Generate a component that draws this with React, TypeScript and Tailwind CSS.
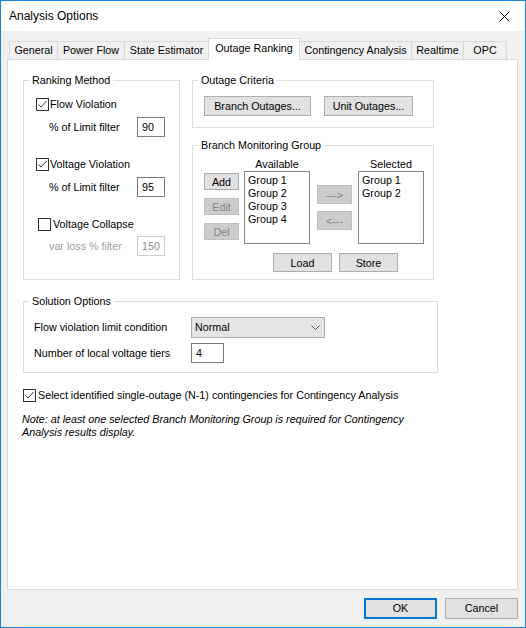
import type { ReactNode } from "react";

const tabs = [
  { label: "General", className: "w-[48px] h-[18px] border-l border-t" },
  { label: "Power Flow", className: "w-[67px] h-[18px] border-l border-t" },
  { label: "State Estimator", className: "w-[84px] h-[18px] border-l border-t" },
  {
    label: "Outage Ranking",
    className: "w-[92px] h-[22px] -mb-px border-l border-t border-r bg-white pb-[3px]",
  },
  { label: "Contingency Analysis", className: "w-[111px] h-[18px] border-t" },
  { label: "Realtime", className: "w-[52px] h-[18px] border-l border-t" },
  { label: "OPC", className: "w-[44px] h-[18px] border-l border-t border-r" },
];

function GroupBox({
  title,
  className = "",
  children,
}: {
  title: string;
  className?: string;
  children: ReactNode;
}) {
  return (
    <fieldset className={`border border-[#dcdcdc] ${className}`}>
      <legend className="ml-[5px] px-[3px] leading-[14px]">{title}</legend>
      {children}
    </fieldset>
  );
}

function CheckBox({ checked = false }: { checked?: boolean }) {
  return (
    <span className="flex h-[13px] w-[13px] shrink-0 items-center justify-center border border-[#333333] bg-white">
      {checked ? (
        <svg width="11" height="11" viewBox="0 0 11 11">
          <polyline
            points="1.5,5.5 4,8 9.5,2"
            fill="none"
            stroke="#333333"
            strokeWidth="1"
          />
        </svg>
      ) : null}
    </span>
  );
}

function Button({
  label,
  className = "",
  disabled = false,
}: {
  label: string;
  className?: string;
  disabled?: boolean;
}) {
  return (
    <div
      className={`flex items-center justify-center border leading-[14px] ${
        disabled
          ? "border-[#bfbfbf] bg-[#cccccc] text-[#838383]"
          : "border-[#adadad] bg-[#e1e1e1]"
      } ${className}`}
    >
      {label}
    </div>
  );
}

function TextBox({
  value,
  className = "",
  disabled = false,
}: {
  value: string;
  className?: string;
  disabled?: boolean;
}) {
  return (
    <div
      className={`flex items-center border bg-white pl-[4px] leading-[14px] ${
        disabled ? "border-[#cccccc] text-[#8d8d8d]" : "border-[#7a7a7a]"
      } ${className}`}
    >
      {value}
    </div>
  );
}

function ListBox({ heading, items }: { heading: string; items: string[] }) {
  return (
    <div className="flex w-[66px] flex-col">
      <div className="flex h-[19px] items-end justify-center leading-[14px]">
        {heading}
      </div>
      <div className="h-[73px] border border-[#828790] bg-white pl-[3px] pt-[2px] leading-[13px]">
        {items.map((item) => (
          <div key={item}>{item}</div>
        ))}
      </div>
    </div>
  );
}

export default function App() {
  return (
    <div className="flex h-[628px] w-[526px] flex-col border border-[#1883d7] bg-[#f0f0f0] font-['Liberation_Sans',Arial,sans-serif] text-[10.75px] text-black">
      {/* title bar */}
      <div className="flex h-[30px] shrink-0 items-center justify-between bg-white pl-[8px] pr-[15px] text-[12px]">
        <span>Analysis Options</span>
        <svg width="11" height="11" viewBox="0 0 11 11">
          <path d="M0.5 0.5 L10.5 10.5 M10.5 0.5 L0.5 10.5" stroke="#000" strokeWidth="1" />
        </svg>
      </div>

      <div className="flex flex-1 flex-col pt-[7px]">
        {/* tab strip */}
        <div className="relative z-10 flex h-[21px] items-end pl-[8px]">
          {tabs.map((tab) => (
            <div
              key={tab.label}
              className={`flex items-center justify-center border-[#d9d9d9] whitespace-nowrap ${tab.className}`}
            >
              {tab.label}
            </div>
          ))}
        </div>

        {/* tab page */}
        <div className="ml-[6px] h-[531px] w-[511px] border border-[#d9d9d9] bg-white pl-[15px] pt-[13px]">
          <div className="flex items-start">
            <GroupBox title="Ranking Method" className="w-[157px]">
              <div className="flex flex-col pb-[23px]">
                <div className="ml-[12px] mt-[10px] flex h-[14px] items-center">
                  <CheckBox checked />
                  <span className="ml-[1px]">Flow Violation</span>
                </div>
                <div className="ml-[25px] mt-[6px] flex items-center">
                  <span className="w-[88px]">% of Limit filter</span>
                  <TextBox value="90" className="h-[20px] w-[28px]" />
                </div>
                <div className="ml-[12px] mt-[20px] flex h-[14px] items-center">
                  <CheckBox checked />
                  <span className="ml-[1px]">Voltage Violation</span>
                </div>
                <div className="ml-[25px] mt-[6px] flex items-center">
                  <span className="w-[88px]">% of Limit filter</span>
                  <TextBox value="95" className="h-[20px] w-[28px]" />
                </div>
                <div className="ml-[14px] mt-[20px] flex h-[14px] items-center">
                  <CheckBox />
                  <span className="ml-[2px]">Voltage Collapse</span>
                </div>
                <div className="ml-[25px] mt-[5px] flex items-center">
                  <span className="w-[88px] text-[#a0a0a0]">var loss % filter</span>
                  <TextBox value="150" disabled className="h-[20px] w-[28px]" />
                </div>
              </div>
            </GroupBox>

            <div className="ml-[12px] flex w-[242px] flex-col">
              <GroupBox title="Outage Criteria" className="w-[242px]">
                <div className="flex gap-[13px] pb-[11px] pl-[11px] pt-[9px]">
                  <Button label="Branch Outages..." className="h-[20px] w-[107px]" />
                  <Button label="Unit Outages..." className="h-[20px] w-[89px]" />
                </div>
              </GroupBox>

              <GroupBox title="Branch Monitoring Group" className="mt-[10px] w-[242px]">
                <div className="flex flex-col pb-[7px] pl-[11px]">
                  <div className="flex items-start">
                    <div className="flex w-[35px] flex-col gap-[8px] pt-[21px]">
                      <Button label="Add" className="h-[17px]" />
                      <Button label="Edit" disabled className="h-[17px]" />
                      <Button label="Del" disabled className="h-[17px]" />
                    </div>
                    <div className="ml-[5px]">
                      <ListBox
                        heading="Available"
                        items={["Group 1", "Group 2", "Group 3", "Group 4"]}
                      />
                    </div>
                    <div className="ml-[7px] flex w-[35px] flex-col gap-[7px] pt-[33px]">
                      <Button label="--->" disabled className="h-[19px]" />
                      <Button label="<---" disabled className="h-[19px]" />
                    </div>
                    <div className="ml-[6px]">
                      <ListBox heading="Selected" items={["Group 1", "Group 2"]} />
                    </div>
                  </div>
                  <div className="ml-[69px] mt-[9px] flex gap-[7px]">
                    <Button label="Load" className="h-[19px] w-[59px]" />
                    <Button label="Store" className="h-[19px] w-[59px]" />
                  </div>
                </div>
              </GroupBox>
            </div>
          </div>

          <GroupBox title="Solution Options" className="mt-[14px] w-[415px]">
            <div className="flex flex-col pb-[9px] pl-[10px] pt-[9px]">
              <div className="flex h-[21px] items-center">
                <span className="w-[157px]">Flow violation limit condition</span>
                <div className="flex h-[21px] w-[134px] items-center justify-between border border-[#adadad] bg-[#e5e5e5] pl-[3px] pr-[4px]">
                  <span>Normal</span>
                  <svg width="9" height="5" viewBox="0 0 9 5">
                    <polyline points="0.5,0.5 4.5,4.5 8.5,0.5" fill="none" stroke="#555" strokeWidth="1" />
                  </svg>
                </div>
              </div>
              <div className="mt-[5px] flex h-[20px] items-center">
                <span className="w-[157px]">Number of local voltage tiers</span>
                <TextBox value="4" className="h-[20px] w-[33px]" />
              </div>
            </div>
          </GroupBox>

          <div className="mt-[15px] flex h-[14px] items-center">
            <CheckBox checked />
            <span className="ml-[2px]">
              Select identified single-outage (N-1) contingencies for Contingency Analysis
            </span>
          </div>

          <p className="-ml-[1px] mt-[11px] italic leading-[13px]">
            Note: at least one selected Branch Monitoring Group is required for Contingency
            <br />
            Analysis results display.
          </p>
        </div>

        {/* dialog buttons */}
        <div className="mt-[8px] flex justify-end gap-[8px] pr-[7px]">
          <div className="flex h-[21px] w-[73px] items-center justify-center border-2 border-[#0078d7] bg-[#e1e1e1]">
            OK
          </div>
          <div className="flex h-[21px] w-[73px] items-center justify-center border border-[#adadad] bg-[#e1e1e1]">
            Cancel
          </div>
        </div>
      </div>
    </div>
  );
}
